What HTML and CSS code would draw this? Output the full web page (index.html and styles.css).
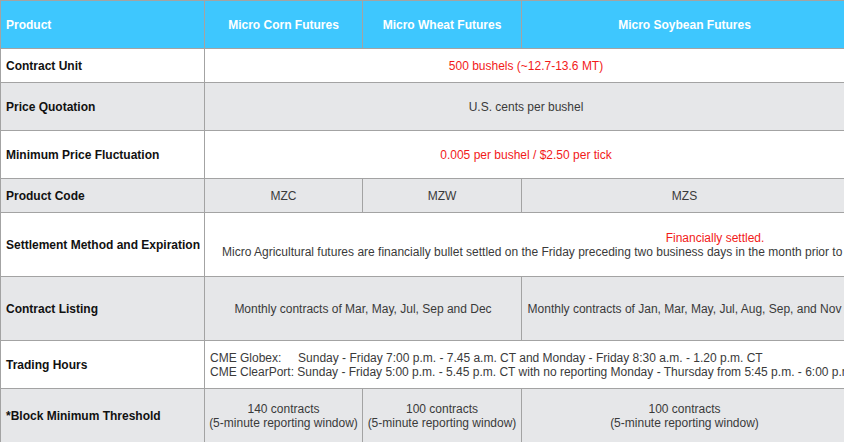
FILE: index.html
```html
<!DOCTYPE html>
<html lang="en">
<head>
<meta charset="utf-8">
<title>Micro Agricultural Futures</title>
<link rel="stylesheet" href="styles.css">
</head>
<body>
<div class="frame">
<table class="spec">
  <thead>
    <tr class="row-head">
      <th class="c1 label">Product</th>
      <th class="c2">Micro Corn Futures</th>
      <th class="c3">Micro Wheat Futures</th>
      <th class="c4">Micro Soybean Futures</th>
    </tr>
  </thead>
  <tbody>
    <tr class="row-white h34">
      <td class="label">Contract Unit</td>
      <td colspan="3" class="red">500 bushels (~12.7-13.6 MT)</td>
    </tr>
    <tr class="row-grey h48">
      <td class="label">Price Quotation</td>
      <td colspan="3">U.S. cents per bushel</td>
    </tr>
    <tr class="row-white h48">
      <td class="label">Minimum Price Fluctuation</td>
      <td colspan="3" class="red">0.005 per bushel / $2.50 per tick</td>
    </tr>
    <tr class="row-grey h34">
      <td class="label">Product Code</td>
      <td>MZC</td>
      <td>MZW</td>
      <td>MZS</td>
    </tr>
    <tr class="row-white h64">
      <td class="label">Settlement Method and Expiration</td>
      <td colspan="3" class="left">
        <div class="settle-box">
          <div class="red settle-title">Financially settled.</div>
          <div class="settle-text">Micro Agricultural futures are financially bullet settled on the Friday preceding two business days in the month prior to the contract month.</div>
        </div>
      </td>
    </tr>
    <tr class="row-grey h64">
      <td class="label">Contract Listing</td>
      <td colspan="2">Monthly contracts of Mar, May, Jul, Sep and Dec</td>
      <td>Monthly contracts of Jan, Mar, May, Jul, Aug, Sep, and Nov</td>
    </tr>
    <tr class="row-white h48">
      <td class="label">Trading Hours</td>
      <td colspan="3" class="left hours"><div>CME Globex:     Sunday - Friday 7:00 p.m. - 7.45 a.m. CT and Monday - Friday 8:30 a.m. - 1.20 p.m. CT</div><div>CME ClearPort: Sunday - Friday 5:00 p.m. - 5.45 p.m. CT with no reporting Monday - Thursday from 5:45 p.m. - 6:00 p.m. CT</div></td>
    </tr>
    <tr class="row-grey h55">
      <td class="label">*Block Minimum Threshold</td>
      <td>140 contracts<br>(5-minute reporting window)</td>
      <td>100 contracts<br>(5-minute reporting window)</td>
      <td>100 contracts<br>(5-minute reporting window)</td>
    </tr>
  </tbody>
</table>
</div>
</body>
</html>
```

FILE: styles.css
```css
* {
  box-sizing: border-box;
}

html, body {
  margin: 0;
  padding: 0;
  background: #ffffff;
  overflow: hidden;
}

.frame {
  width: 844px;
  height: 442px;
  overflow: hidden;
}

.spec {
  width: 848px;
  table-layout: fixed;
  border-collapse: separate;
  border-spacing: 0;
  border-top: 1px solid #a3a3a3;
  border-left: 1px solid #a3a3a3;
  font-family: "Liberation Sans", Arial, sans-serif;
  font-size: 12px;
  line-height: 14px;
  color: #3a3a3a;
}

.spec th,
.spec td {
  border-right: 1px solid #a3a3a3;
  border-bottom: 1px solid #a3a3a3;
  padding: 0 3px;
  text-align: center;
  vertical-align: middle;
}

.c1 { width: 204px; }
.c2 { width: 158px; }
.c3 { width: 159px; }
.c4 { width: 326px; }

.row-head th {
  height: 48px;
  background: #3ec7fe;
  color: #ffffff;
  font-weight: bold;
}

.row-white td { background: #ffffff; }
.row-grey td { background: #e6e7e9; }

.h34 td { height: 34px; }
.h48 td { height: 48px; }
.h55 td { height: 55px; }
.h64 td { height: 64px; }

.spec .label {
  text-align: left;
  padding-left: 5px;
  padding-right: 0;
  white-space: nowrap;
  font-weight: bold;
  color: #111111;
}

.row-head .label {
  color: #ffffff;
}

.red {
  color: #f21a1a;
}

.spec .left {
  text-align: left;
  padding-left: 5px;
}

.settle-box {
  width: 986px;
  margin-left: 12px;
}

.settle-title {
  text-align: center;
}

.settle-text {
  white-space: nowrap;
}

.hours div {
  white-space: pre;
}
```
